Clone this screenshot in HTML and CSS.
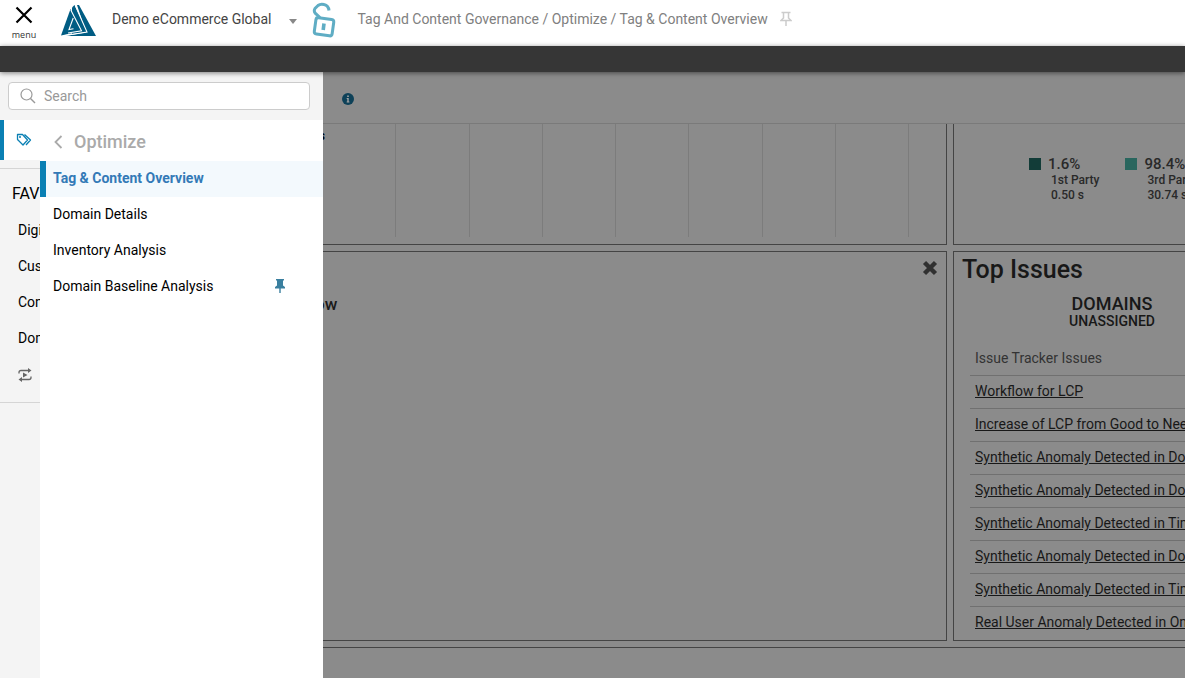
FILE: index.html
```
<!DOCTYPE html>
<html lang="en">
<head>
<meta charset="utf-8">
<title>Tag &amp; Content Overview</title>
<link rel="stylesheet" href="styles.css">
</head>
<body>
<header class="topbar">
  <button class="menu-btn" type="button">
    <svg width="18" height="18" viewBox="0 0 18 18"><path d="M1.5 1.5l15 15M16.500 1.500l-15 15" stroke="#000" stroke-width="2.200" fill="none"/></svg>
    <span>menu</span>
  </button>
  <svg class="logo" width="36" height="32" viewBox="0 0 36 32" role="img" aria-label="Home"><g fill="#005c83"><path d="M9.500 4L0 30.500l20-4.200z"/><path d="M11 2.500L13.500 0 26.500 27 11 29z"/><path d="M16 0h2L35 31H4l21-3.500z"/></g><path d="M14.500 1L26 27 2.500 30.800M9.800 5L20.500 25.800 7 28M12.200 13L8 24.500l4.500-.7" fill="none" stroke="#fff" stroke-width="1.100"/></svg>
  <button class="account" type="button"><span>Demo eCommerce Global</span><i class="caret"></i></button>
  <svg class="lock" width="24" height="36" viewBox="0 0 24 36" role="img" aria-label="Unlocked"><g fill="none" stroke="#5fadc4" stroke-width="3"><path d="M8 15.500L3.200 11.200Q1.500 8.800 3 6.500L6 3.500Q8.500 1.500 12 2.500Q16.500 3.500 17 8.500"/><rect x="3" y="16.500" width="18" height="16.500" rx="2.500" transform="rotate(8 12 25)"/><path d="M12 21.500l-.8 6.500" stroke-width="3.600"/></g></svg>
  <nav class="crumbs" aria-label="Breadcrumb">Tag And Content Governance / Optimize / Tag &amp; Content Overview</nav>
  <button class="plain" type="button" aria-label="Pin page"><svg width="12" height="16" viewBox="0 0 12 16"><path d="M1.500 1.500h9M3.500 2v5L1 9.500h10L8.500 7V2M6 10v5" fill="none" stroke="#ccc" stroke-width="1.500"/></svg></button>
</header>
<div class="band"></div>
<div class="body">
  <aside class="drawer">
    <label class="search">
      <svg width="16" height="16" viewBox="0 0 16 16"><circle cx="6.500" cy="6.500" r="5.500" fill="none" stroke="#999" stroke-width="1.200"/><path d="M10.500 10.500l4.500 4.500" stroke="#999" stroke-width="1.400"/></svg>
      <input type="text" placeholder="Search" aria-label="Search">
    </label>
    <div class="menus">
      <div class="rail">
        <button class="rail-active" type="button" aria-label="Tags"><svg width="16" height="14" viewBox="0 0 16 14"><path d="M1.500 1.500h5l5 5.500-4.500 5L1.500 6.500zM8.500 1.500L14.500 7 10 12" fill="none" stroke="#0a80b4" stroke-width="1.300" stroke-linejoin="round"/><circle cx="4" cy="4" r="1" fill="#0a80b4"/></svg></button>
        <div class="fav">
          <h2>FAV</h2>
          <a href="#">Digi</a>
          <a href="#">Cus</a>
          <a href="#">Con</a>
          <a href="#">Dom</a>
          <button class="replay" type="button" aria-label="Replay"><svg width="14" height="14" viewBox="0 0 14 14"><path d="M1 5.500V4.500Q1 2.500 3 2.500h8M13 8.500v1q0 2-2 2H3" fill="none" stroke="#666" stroke-width="1.300"/><path d="M10 0l3.500 2.500L10 5zM4 9L.5 11.500 4 14zM5 4.500L9.500 7 5 9.500z" fill="#666"/></svg></button>
        </div>
      </div>
      <nav class="submenu">
        <button class="back" type="button"><svg width="9" height="14" viewBox="0 0 9 14"><path d="M7.500 1l-6 6 6 6" fill="none" stroke="#aaa" stroke-width="1.800"/></svg><span>Optimize</span></button>
        <a class="current" href="#">Tag &amp; Content Overview</a>
        <a href="#">Domain Details</a>
        <a href="#">Inventory Analysis</a>
        <a href="#">Domain Baseline Analysis <svg width="10" height="14" viewBox="0 0 10 14"><path d="M1 0h8v1.500H8v5l2 1.500v1.500H5.700V14H4.300V9.500H0V8l2-1.500v-5H1z" fill="#3a7f9f"/></svg></a>
      </nav>
    </div>
  </aside>
  <main class="content">
    <div class="toolbar"><button class="info" type="button" aria-label="Information"><svg width="12" height="12" viewBox="0 0 12 12"><circle cx="6" cy="6" r="6" fill="#0e4158"/><path d="M5.200 2.500h1.600v1.500H5.200zM4.700 5h2v3.500h.7v1H4.700v-1h.6V6h-.6z" fill="#a5a5a5"/></svg></button></div>
    <div class="panels">
      <section class="panel chart">
        <span class="axis-label">s</span>
        <div class="grid-lines"><i></i><i></i><i></i><i></i><i></i><i></i><i></i><i></i></div>
      </section>
      <section class="panel legend">
        <div class="entry"><i class="swatch first"></i><div><strong>1.6%</strong><span>1st Party</span><span>0.50 s</span></div></div>
        <div class="entry"><i class="swatch third"></i><div><strong>98.4%</strong><span>3rd Party</span><span>30.74 s</span></div></div>
      </section>
      <section class="panel flow">
        <button class="close" type="button" aria-label="Close"><svg width="16" height="16" viewBox="0 0 16 16"><path d="M2.500 2.500l11 11M13.500 2.500l-11 11" stroke="#303030" stroke-width="4.400"/></svg></button>
        <h3>ow</h3>
      </section>
      <section class="panel issues">
        <h1>Top Issues</h1>
        <div class="domains"><b>DOMAINS</b><span>UNASSIGNED</span></div>
        <table>
          <thead><tr><th>Issue Tracker Issues</th></tr></thead>
          <tbody>
            <tr><td><a href="#">Workflow for LCP</a></td></tr>
            <tr><td><a href="#">Increase of LCP from Good to Need</a></td></tr>
            <tr><td><a href="#">Synthetic Anomaly Detected in Dom</a></td></tr>
            <tr><td><a href="#">Synthetic Anomaly Detected in Dom</a></td></tr>
            <tr><td><a href="#">Synthetic Anomaly Detected in Time</a></td></tr>
            <tr><td><a href="#">Synthetic Anomaly Detected in Dom</a></td></tr>
            <tr><td><a href="#">Synthetic Anomaly Detected in Time</a></td></tr>
            <tr><td><a href="#">Real User Anomaly Detected in Onl</a></td></tr>
          </tbody>
        </table>
      </section>
      <section class="panel last"></section>
    </div>
  </main>
</div>
</body>
</html>
```
FILE: styles.css
```
* { box-sizing: border-box; }
body {
  margin: 0;
  height: 100vh;
  display: flex;
  flex-direction: column;
  overflow: hidden;
  font: 14px/20px Roboto, "Liberation Sans", sans-serif;
  color: #000;
  background: #8b8b8b;
}
button {
  border: 0;
  padding: 0;
  background: none;
  font: inherit;
  color: inherit;
  cursor: pointer;
}
a { color: inherit; text-decoration: none; }
svg { display: block; flex: none; }
h1, h2, h3 { margin: 0; font-weight: 400; }

/* Header */
.topbar {
  flex: none;
  display: flex;
  align-items: flex-start;
  height: 46px;
  background: #fff;
  white-space: nowrap;
}
.menu-btn {
  width: 48px;
  padding-top: 6px;
  display: flex;
  flex-direction: column;
  align-items: center;
  gap: 5px;
  font: 9px/12px "Open Sans", sans-serif;
  color: #333;
}
.logo { margin: 5px 0 0 13px; }
.account {
  margin: 9px 0 0 15px;
  display: flex;
  align-items: center;
  gap: 17px;
  color: #444;
}
.caret {
  margin-top: 4px;
  border: 4px solid transparent;
  border-top: 5px solid #888;
  border-bottom: 0;
}
.lock { margin: 2px 0 0 15px; }
.crumbs { margin: 9px 0 0 22px; color: #808080; }
.plain { margin: 11px 0 0 12px; }
.band {
  flex: none;
  height: 26px;
  background: #363636;
  box-shadow: 0 1px 5px rgba(0, 0, 0, 0.5);
  z-index: 1;
}
.body { flex: 1; min-height: 0; display: flex; }

/* Navigation drawer */
.drawer {
  flex: none;
  width: 323px;
  display: flex;
  flex-direction: column;
  background: #f4f4f4;
}
.search {
  display: flex;
  align-items: center;
  gap: 8px;
  height: 28px;
  margin: 10px 13px 10px 8px;
  padding: 0 11px;
  border: 1px solid #ccc;
  border-radius: 4px;
  background: #fff;
}
.search input {
  flex: 1;
  min-width: 0;
  border: 0;
  padding: 0;
  outline: 0;
  background: none;
  font: inherit;
}
.search input::placeholder { color: #999; }
.menus { flex: 1; display: flex; }
.rail { width: 40px; overflow: hidden; white-space: nowrap; }
.rail-active {
  display: flex;
  align-items: center;
  width: 40px;
  height: 40px;
  padding-left: 12px;
  border-left: 4px solid #0a80b4;
  background: #fff;
}
.fav {
  margin-top: 8px;
  padding: 13px 0 18px;
  border: 1px solid #d5d5d5;
  border-width: 1px 0;
}
.fav h2 { padding-left: 12px; font-size: 16px; line-height: 24px; margin-bottom: 6px; }
.fav a { display: block; padding-left: 18px; line-height: 36px; }
.replay { display: block; margin: 12px 0 2px 18px; }
.submenu { flex: 1; background: #fff; }
.back {
  display: flex;
  align-items: center;
  gap: 11px;
  height: 41px;
  padding: 2px 0 0 14px;
  font-size: 18px;
  font-weight: 500;
  color: #aaa;
}
.submenu a {
  display: flex;
  align-items: center;
  justify-content: space-between;
  height: 36px;
  padding: 0 38px 2px 13px;
  line-height: 34px;
}
.submenu .current {
  padding-left: 7px;
  border-left: 6px solid #0a80b4;
  background: #f3f9fd;
  font-weight: 700;
  color: #337ab7;
}

/* Page behind the drawer */
.content {
  flex: 1;
  min-width: 0;
  display: flex;
  flex-direction: column;
  overflow: hidden;
}
.toolbar {
  flex: none;
  height: 52px;
  padding: 21px 0 0 19px;
  border-bottom: 1px solid #7a7a7a;
}
.info { display: block; }
.panels {
  flex: 1;
  display: grid;
  grid-template-columns: minmax(0, 1fr) 232px;
  grid-template-rows: auto auto 1fr;
  gap: 6px;
}
.panel {
  border: 1px solid #444;
  border-width: 1px 0 1px 1px;
  overflow: hidden;
}
.chart, .flow { border-width: 1px 1px 1px 0; }
.chart, .legend { border-top: 0; height: 121px; }
.chart { display: flex; }
.axis-label {
  width: 2px;
  margin-top: 2px;
  display: flex;
  justify-content: flex-end;
  overflow: hidden;
  font-size: 12px;
  font-weight: 700;
}
.grid-lines {
  flex: 1;
  display: flex;
  height: 113px;
  margin-left: -2px;
  padding-right: 37px;
}
.grid-lines i { flex: 1; border-right: 1px solid #7c7c7c; }
.legend {
  display: flex;
  gap: 26px;
  padding: 32px 0 0 75px;
  color: #292929;
  white-space: nowrap;
}
.entry { display: flex; gap: 7px; font-size: 12px; line-height: 15px; font-weight: 500; }
.entry strong { display: block; font-size: 15px; line-height: 17px; font-weight: 500; }
.entry span { display: block; padding-left: 3px; }
.swatch { width: 12px; height: 12px; margin-top: 2px; flex: none; }
.first { background: #123c38; }
.third { background: #29665e; }
.flow { padding: 8px 8px 0 0; }
.close { display: block; margin-left: auto; }
.flow h3 {
  margin: 18px 0 0 -8px;
  font-size: 17px;
  line-height: 20px;
  font-weight: 500;
  color: #1a1a1a;
}
.issues { padding: 3px 0 1px 8px; white-space: nowrap; color: #181818; }
.issues h1 { font-size: 25px; line-height: 30px; font-weight: 500; }
.domains {
  width: 300px;
  padding-top: 10px;
  display: flex;
  flex-direction: column;
  align-items: center;
  font-weight: 500;
  line-height: 16px;
}
.domains b { font-size: 18px; line-height: 18px; font-weight: 500; }
.issues table { margin: 13px 0 0 8px; width: 100%; border-collapse: collapse; }
.issues th, .issues td { height: 33px; padding: 0 5px 1px; text-align: left; font-weight: 400; }
.issues td { border-top: 1px solid #707070; }
.issues th { color: #333; }
.issues a { text-decoration: underline; }
.last { grid-column: 1 / -1; border-width: 1px 0 0; }
```
